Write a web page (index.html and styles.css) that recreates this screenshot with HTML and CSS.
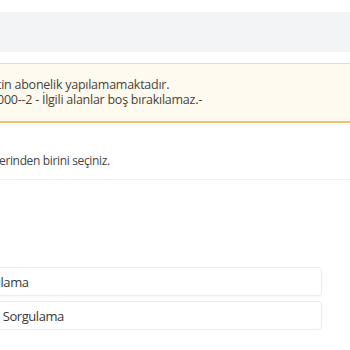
FILE: index.html
```html
<!DOCTYPE html>
<html lang="tr">
<head>
  <meta charset="UTF-8">
  <title>Abonelik</title>
  <link rel="stylesheet" href="styles.css">
</head>
<body>
  <div class="topbar"></div>

  <!-- Uyari kutusu -->
  <div class="alert">
    <p class="alert-line">tin abonelik yapılamamaktadır.</p>
    <p class="alert-line">000--2 - İlgili alanlar boş bırakılamaz.-</p>
  </div>

  <div class="intro">
    <p class="intro-text">erinden birini seçiniz.</p>
  </div>

  <div class="options">
    <div class="option"><span class="option-label">ulama</span></div>
    <div class="option"><span class="option-label">e Sorgulama</span></div>
  </div>
</body>
</html>
```

FILE: styles.css
```css
html, body {
  margin: 0;
  padding: 0;
  background-color: #fff;
  overflow: hidden;
}

body {
  font-family: 'Open Sans', 'Noto Sans', sans-serif;
  color: #555;
}

p {
  margin: 0;
}

.topbar {
  margin-top: 12px;
  height: 40px;
  background-color: #f3f4f6;
}

/* Alert */
.alert {
  margin-top: 11px;
  padding: 13px 0 14px;
  background-color: #fffaf0;
  border-top: 1px solid #f1dca6;
  border-bottom: 2px solid #ebc56c;
}

.alert-line {
  font-size: 12.5px;
  line-height: 15px;
  letter-spacing: -0.25px;
  color: #48433a;
  margin-left: -3px;
}

/* Intro */
.intro {
  padding: 29px 0 9px;
  border-bottom: 1px solid #f0f0f0;
}

.intro-text {
  font-size: 12px;
  line-height: 18px;
  letter-spacing: -0.35px;
  color: #444;
  margin-left: -1px;
}

/* Options */
.options {
  display: flex;
  flex-direction: column;
  gap: 5px;
  margin-top: 87px;
  width: 322px;
}

.option {
  height: 27px;
  display: flex;
  align-items: center;
  margin-left: -10px;
  padding-left: 8px;
  border: 1px solid #ececec;
  border-radius: 4px;
  box-shadow: 0 1px 2px rgba(0, 0, 0, 0.04);
}

.option-label {
  font-size: 13px;
  letter-spacing: -0.45px;
  color: #3a3a3a;
  margin-left: -6px;
}
```
